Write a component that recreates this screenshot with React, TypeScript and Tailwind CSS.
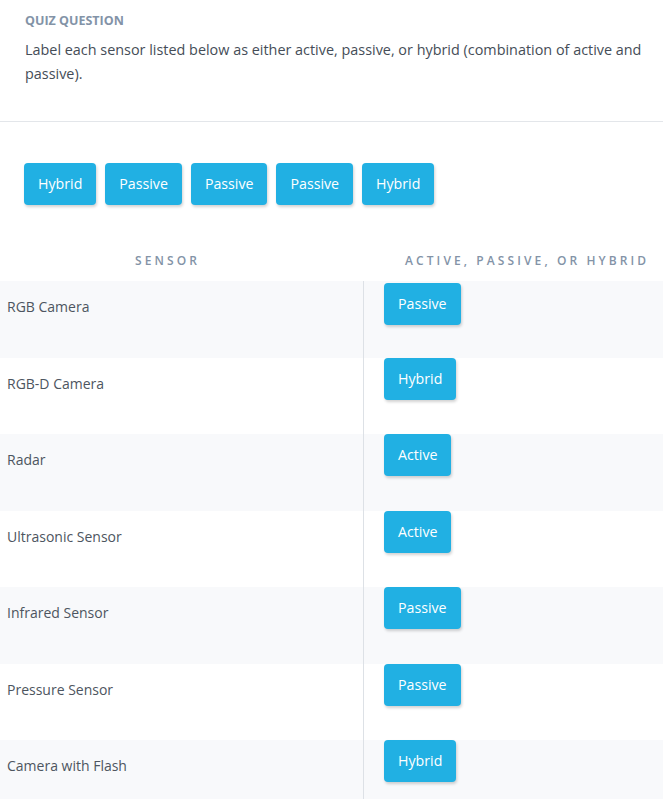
import React from "react";

const bank = ["Hybrid", "Passive", "Passive", "Passive", "Hybrid"];

const rows: [string, string][] = [
  ["RGB Camera", "Passive"],
  ["RGB-D Camera", "Hybrid"],
  ["Radar", "Active"],
  ["Ultrasonic Sensor", "Active"],
  ["Infrared Sensor", "Passive"],
  ["Pressure Sensor", "Passive"],
  ["Camera with Flash", "Hybrid"],
];

const Chip = ({ label }: { label: string }) => (
  <div className="h-[42px] px-[14px] flex items-center rounded-[4px] bg-[#21b0e3] text-white text-[14.2px] shadow-[1px_2px_3px_rgba(0,0,0,0.18)] cursor-pointer">
    {label}
  </div>
);

export default function App() {
  return (
    <div
      className="w-[663px] h-[799px] overflow-hidden bg-white"
      style={{ fontFamily: '"Open Sans", sans-serif' }}
    >
      <div className="pl-[25px] pr-[12px] pt-[13px] pb-[35px] border-b border-[#e3e6ea]">
        <div className="text-[12.5px] font-bold text-[#8393a7] leading-[16px]">
          QUIZ QUESTION
        </div>
        <p className="mt-[9px] text-[14.4px] leading-[24px] text-[#454d57]">
          Label each sensor listed below as either active, passive, or hybrid
          (combination of active and passive).
        </p>
      </div>

      <div className="flex gap-[9px] pl-[24px] pt-[41px]">
        {bank.map((b, i) => (
          <Chip key={i} label={b} />
        ))}
      </div>

      <div className="grid grid-cols-[363px_1fr] mt-[40px]">
        <div className="h-[36px] pt-[7px] flex items-start justify-center pr-[28px] text-[12px] font-semibold tracking-[3.1px] text-[#8393a7]">
          SENSOR
        </div>
        <div className="h-[36px] pt-[7px] flex items-start pl-[42px] text-[12px] font-semibold tracking-[3.1px] text-[#8393a7]">
          ACTIVE, PASSIVE, OR HYBRID
        </div>
        {rows.map(([s, a], i) => (
          <React.Fragment key={s}>
            <div
              className={`h-[76.5px] pl-[7px] pt-[14px] text-[14px] leading-[24px] text-[#4d5560] ${
                i % 2 === 0 ? "bg-[#f8f9fb]" : "bg-white"
              }`}
            >
              {s}
            </div>
            <div
              className={`h-[76.5px] pl-[20px] border-l border-[#dde1e6] flex items-start ${
                i === 0 ? "pt-[2px]" : "pt-0"
              } ${i % 2 === 0 ? "bg-[#f8f9fb]" : "bg-white"}`}
            >
              <Chip label={a} />
            </div>
          </React.Fragment>
        ))}
      </div>
    </div>
  );
}
